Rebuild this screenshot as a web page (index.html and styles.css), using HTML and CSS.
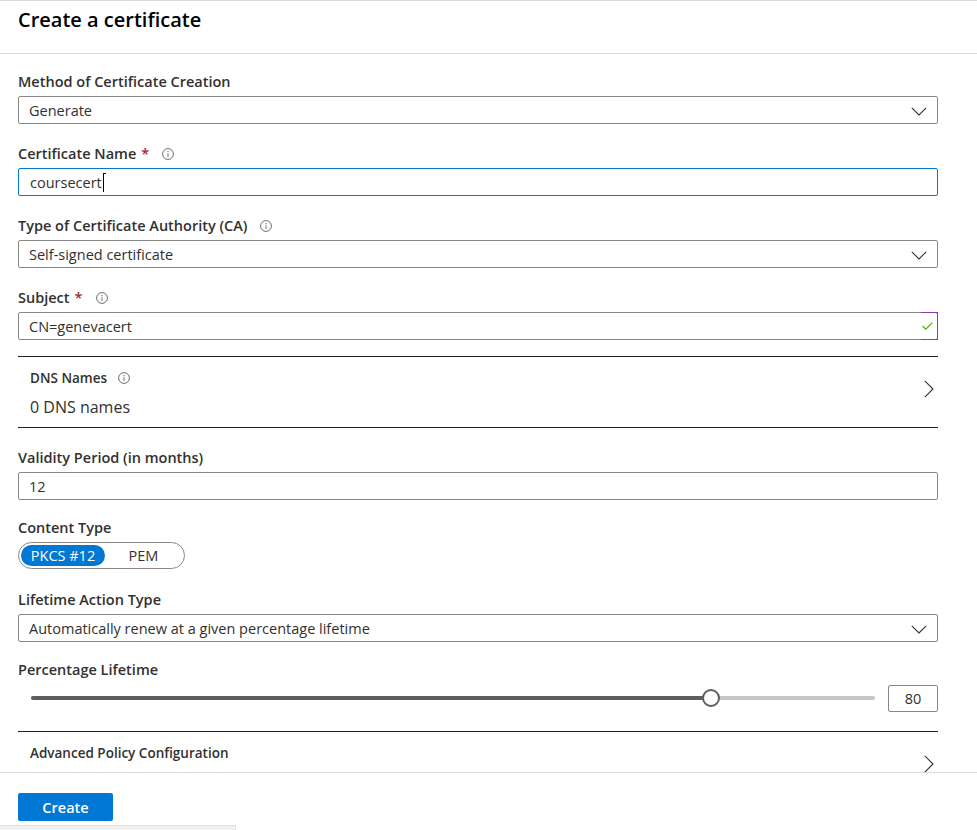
FILE: index.html
```html
<!DOCTYPE html>
<html lang="en">
<head>
<meta charset="utf-8">
<title>Create a certificate</title>
<link rel="stylesheet" href="styles.css">
</head>
<body>
<div class="blade">
  <header class="blade-header">
    <h1 class="title">Create a certificate</h1>
  </header>

  <main class="blade-body">
    <div class="field">
      <div class="label"><span>Method of Certificate Creation</span></div>
      <div class="control">
        <span class="value">Generate</span>
        <svg class="chev-down" width="16" height="9" viewBox="0 0 16 9"><path d="M0.8 0.8 L8 8 L15.2 0.8" fill="none" stroke="#323130" stroke-width="1.1"/></svg>
      </div>
    </div>

    <div class="field">
      <div class="label"><span>Certificate Name</span><span class="req">*</span><svg class="info" width="12" height="12" viewBox="0 0 12 12"><circle cx="6" cy="6" r="5.4" fill="none" stroke="#605e5c" stroke-width="0.9"/><circle cx="6" cy="3.7" r="0.65" fill="#605e5c"/><path d="M6 5.3 V9" stroke="#605e5c" stroke-width="0.9"/></svg></div>
      <div class="control control--focus">
        <span class="value value--input">coursecert</span><span class="caret"></span>
      </div>
    </div>

    <div class="field">
      <div class="label"><span>Type of Certificate Authority (CA)</span><svg class="info" width="12" height="12" viewBox="0 0 12 12"><circle cx="6" cy="6" r="5.4" fill="none" stroke="#605e5c" stroke-width="0.9"/><circle cx="6" cy="3.7" r="0.65" fill="#605e5c"/><path d="M6 5.3 V9" stroke="#605e5c" stroke-width="0.9"/></svg></div>
      <div class="control">
        <span class="value">Self-signed certificate</span>
        <svg class="chev-down" width="16" height="9" viewBox="0 0 16 9"><path d="M0.8 0.8 L8 8 L15.2 0.8" fill="none" stroke="#323130" stroke-width="1.1"/></svg>
      </div>
    </div>

    <div class="field field--tight">
      <div class="label"><span>Subject</span><span class="req">*</span><svg class="info" width="12" height="12" viewBox="0 0 12 12"><circle cx="6" cy="6" r="5.4" fill="none" stroke="#605e5c" stroke-width="0.9"/><circle cx="6" cy="3.7" r="0.65" fill="#605e5c"/><path d="M6 5.3 V9" stroke="#605e5c" stroke-width="0.9"/></svg></div>
      <div class="control control--valid">
        <span class="value">CN=genevacert</span>
        <span class="valid-box">
          <svg width="11" height="8" viewBox="0 0 11 8"><path d="M0.6 4 L3.8 7.2 L10.4 0.6" fill="none" stroke="#57a300" stroke-width="1.1"/></svg>
        </span>
      </div>
    </div>

    <div class="nav-section">
      <div class="nav-text">
        <div class="nav-title"><span>DNS Names</span><svg class="info info--small" width="12" height="12" viewBox="0 0 12 12"><circle cx="6" cy="6" r="5.4" fill="none" stroke="#605e5c" stroke-width="0.9"/><circle cx="6" cy="3.7" r="0.65" fill="#605e5c"/><path d="M6 5.3 V9" stroke="#605e5c" stroke-width="0.9"/></svg></div>
        <div class="nav-value">0 DNS names</div>
      </div>
      <svg class="chev-right" width="10" height="18" viewBox="0 0 10 18"><path d="M0.8 0.8 L9 9 L0.8 17.2" fill="none" stroke="#323130" stroke-width="1.1"/></svg>
    </div>

    <div class="field field--after-nav field--validity">
      <div class="label"><span>Validity Period (in months)</span></div>
      <div class="control">
        <span class="value">12</span>
      </div>
    </div>

    <div class="field field--toggle">
      <div class="label"><span>Content Type</span></div>
      <div class="toggle">
        <span class="seg seg--active">PKCS #12</span>
        <span class="seg">PEM</span>
      </div>
    </div>

    <div class="field field--lifetime">
      <div class="label"><span>Lifetime Action Type</span></div>
      <div class="control">
        <span class="value">Automatically renew at a given percentage lifetime</span>
        <svg class="chev-down" width="16" height="9" viewBox="0 0 16 9"><path d="M0.8 0.8 L8 8 L15.2 0.8" fill="none" stroke="#323130" stroke-width="1.1"/></svg>
      </div>
    </div>

    <div class="field field--slider">
      <div class="label"><span>Percentage Lifetime</span></div>
      <div class="slider-row">
        <div class="slider">
          <div class="track">
            <div class="fill" style="width:80.6%"></div>
            <div class="thumb" style="left:80.6%"></div>
          </div>
        </div>
        <div class="num-box">80</div>
      </div>
    </div>

    <div class="nav-section nav-section--open">
      <div class="nav-text">
        <div class="nav-title"><span>Advanced Policy Configuration</span></div>
      </div>
      <svg class="chev-right" width="10" height="18" viewBox="0 0 10 18"><path d="M0.8 0.8 L9 9 L0.8 17.2" fill="none" stroke="#323130" stroke-width="1.1"/></svg>
    </div>
  </main>

  <footer class="blade-footer">
    <button class="btn-primary" type="button">Create</button>
    <div class="status-strip"></div>
  </footer>
</div>
</body>
</html>
```

FILE: styles.css
```css
* { box-sizing: border-box; }

body {
  margin: 0;
  background: #ffffff;
  color: #323130;
  font-family: "Open Sans", "Noto Sans", "Liberation Sans", sans-serif;
}

.blade {
  width: 977px;
}

.blade-header {
  height: 54px;
  border-top: 1px solid #dcdcdc;
  border-bottom: 1px solid #dcdcdc;
  padding: 5px 18px 0;
}

.title {
  margin: 0;
  font-size: 20px;
  line-height: 28px;
  font-weight: 600;
  color: #000000;
}

.blade-body {
  height: 718px;
  overflow: hidden;
  padding: 18px 39px 0 18px;
}

.field {
  margin-bottom: 20px;
}

.field--tight { margin-bottom: 16px; }
.field--after-nav { margin-top: 20px; }
.field--validity { margin-bottom: 18px; }
.field--toggle { margin-bottom: 21px; }
.field--lifetime { margin-bottom: 18px; }
.field--slider { margin-bottom: 19px; }

.label {
  display: flex;
  align-items: center;
  height: 20px;
  margin-bottom: 4px;
  font-size: 14.5px;
  line-height: 20px;
  font-weight: 600;
  color: #323130;
}

.req {
  color: #a4262c;
  margin-left: 5px;
}

.info {
  margin-left: 13px;
  flex: none;
}

.control {
  display: flex;
  align-items: center;
  height: 28px;
  border: 1px solid #8a8886;
  border-radius: 2px;
  padding: 0 10px;
  font-size: 14.5px;
  line-height: 20px;
  color: #323130;
}

.value {
  margin-top: 2px;
}

.control--focus {
  border-color: #0078d4;
}

.value--input {
  padding-left: 1px;
}

.caret {
  position: relative;
  width: 1px;
  height: 19px;
  margin-left: 1px;
  margin-top: 1px;
  background: #000000;
}

.caret::before {
  content: "";
  position: absolute;
  top: 0;
  left: 0;
  width: 3px;
  height: 1px;
  background: #000000;
}

.chev-down {
  margin-left: auto;
  margin-top: 2px;
  flex: none;
}

.control--valid {
  padding-right: 0;
}

.valid-box {
  display: flex;
  align-items: center;
  margin-left: auto;
  margin-right: -1px;
  align-self: stretch;
  margin-top: -1px;
  margin-bottom: -1px;
  width: 17px;
  padding-left: 1px;
  border: 1px solid #8f3ab3;
  border-left: none;
}

.nav-section {
  display: flex;
  align-items: flex-start;
  border-top: 1px solid #1f1e1d;
  border-bottom: 1px solid #1f1e1d;
  padding: 12px 4px 9px 12px;
}

.nav-section--open {
  border-bottom: none;
}

.nav-text {
  flex: 1;
}

.nav-title {
  display: flex;
  align-items: center;
  font-size: 13.5px;
  line-height: 18px;
  font-weight: 600;
  color: #323130;
}

.info--small {
  margin-left: 11px;
}

.nav-value {
  margin-top: 9px;
  font-size: 16px;
  line-height: 22px;
  color: #323130;
}

.chev-right {
  margin-top: 11px;
  flex: none;
}

.toggle {
  display: inline-flex;
  align-items: center;
  height: 27px;
  border: 1px solid #8a8886;
  border-radius: 14px;
  padding: 0 2px;
}

.seg {
  display: flex;
  align-items: center;
  justify-content: center;
  width: 77px;
  height: 21px;
  font-size: 14.5px;
  line-height: 20px;
  color: #323130;
  border-radius: 11px;
}

.seg--active {
  width: 84px;
  background: #0078d4;
  color: #ffffff;
}

.slider-row {
  display: flex;
  align-items: center;
  height: 28px;
  padding-left: 13px;
  gap: 13px;
}

.slider {
  width: 844px;
  flex: none;
}

.track {
  position: relative;
  height: 4px;
  border-radius: 2px;
  background: #c8c6c4;
}

.fill {
  height: 4px;
  border-radius: 2px;
  background: #605e5c;
}

.thumb {
  position: absolute;
  top: 50%;
  width: 18px;
  height: 18px;
  margin: -9px 0 0 -9px;
  border: 2px solid #605e5c;
  border-radius: 50%;
  background: #ffffff;
}

.num-box {
  width: 50px;
  height: 27px;
  border: 1px solid #8a8886;
  border-radius: 2px;
  display: flex;
  align-items: center;
  justify-content: center;
  font-size: 14.5px;
  color: #323130;
}

.blade-footer {
  border-top: 1px solid #dcdcdc;
  padding: 20px 0 0 0;
}

.btn-primary {
  display: block;
  margin-left: 18px;
  width: 95px;
  height: 28px;
  border: none;
  border-radius: 2px;
  background: #0078d4;
  color: #ffffff;
  font-family: inherit;
  font-size: 14.5px;
  font-weight: 600;
  padding: 0;
}

.status-strip {
  margin-top: 4px;
  width: 236px;
  height: 10px;
  background: #f3f2f1;
  border-top: 1px solid #e1dfdd;
  border-right: 1px solid #e1dfdd;
}
```
